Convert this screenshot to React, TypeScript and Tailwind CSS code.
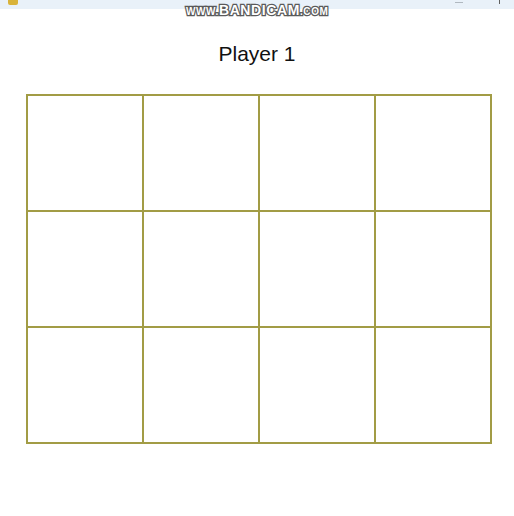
const cells = Array.from({ length: 12 }, (_, i) => i)

export default function App() {
  return (
    <div className="relative h-[516px] w-[514px] bg-white font-['Liberation_Sans',Arial,sans-serif]">
      {/* window title bar strip */}
      <div className="flex h-[9px] items-start justify-between bg-[#e9f1f9] px-[8px]">
        <div className="h-[5px] w-[10px] rounded-b-[2px] bg-[#d9b33a]" />
        <div className="flex gap-[36px] pr-[6px]">
          <div className="mt-[2px] h-[1px] w-[8px] bg-[#b0b8c0]" />
          <div className="h-[4px] w-[1px] bg-[#606060]" />
        </div>
      </div>

      {/* recorder watermark */}
      <div className="absolute left-[186px] top-[2px] text-[14px] font-bold leading-[16px] tracking-[0.6px] text-white [-webkit-text-stroke:2.5px_#5a5a5a] [paint-order:stroke_fill]">
        <span className="text-[10px]">WWW.</span>BANDICAM<span className="text-[10px]">.COM</span>
      </div>

      <h1 className="mt-[33px] text-center text-[21px] leading-[24px] text-[#111]">Player 1</h1>

      <div className="ml-[26px] mt-[28px] grid w-[466px] grid-cols-4 gap-[2px] bg-[#a29c45] p-[2px]">
        {cells.map((c) => (
          <div key={c} className="h-[114px] bg-white" />
        ))}
      </div>
    </div>
  )
}
